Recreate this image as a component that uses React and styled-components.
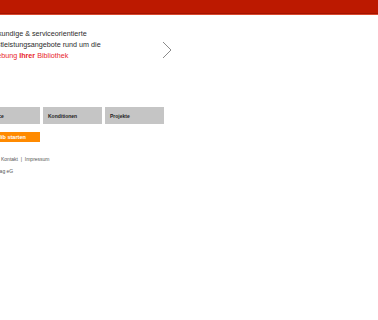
import React from 'react';
import styled, { createGlobalStyle } from 'styled-components';

const GlobalStyle = createGlobalStyle`
  html, body {
    margin: 0;
    padding: 0;
    background: #ffffff;
    overflow: hidden;
  }
  body {
    font-family: 'Liberation Sans', Arial, sans-serif;
  }
`;

const TABS = ['Service', 'Konditionen', 'Projekte'];

// --- Styled Components ---

const Header = styled.header`
  height: 13px;
  background: #bc1900;
  border-bottom: 1px solid #a31400;
  box-shadow: 0 1px 0 #d8482e;
`;

const Page = styled.main`
  margin-left: -19px;
  width: 200px;
  padding-top: 14px;
`;

const Teaser = styled.section`
  display: flex;
  align-items: flex-start;
  justify-content: space-between;
`;

const TeaserText = styled.p`
  margin: 0;
  padding-left: 1px;
  font-size: 7.2px;
  line-height: 11px;
  color: #2b2b2b;
`;

const Highlight = styled.span`
  color: #e8262b;
  b { font-weight: 700; }
`;

const Chevron = styled.svg`
  width: 12px;
  height: 18px;
  margin-top: 13px;
  margin-right: 8px;
`;

const Tabs = styled.nav`
  display: flex;
  gap: 3px;
  margin-top: 46px;
`;

const Tab = styled.div`
  width: 59px;
  height: 17px;
  display: flex;
  align-items: center;
  padding-left: 5px;
  box-sizing: border-box;
  background: #c5c5c5;
  font-size: 5px;
  font-weight: 700;
  color: #222;
`;

const StartButton = styled.button`
  display: flex;
  align-items: center;
  margin-top: 8px;
  width: 59px;
  height: 10px;
  padding: 0 0 0 7px;
  border: none;
  background: #ff8a00;
  color: #fff;
  font-family: 'Liberation Sans', Arial, sans-serif;
  font-size: 5.5px;
  font-weight: 700;
`;

const Footer = styled.footer`
  margin-top: 11px;
  padding-left: 20px;
  font-size: 5px;
  line-height: 12px;
  color: #555;
`;

const Owner = styled.div`
  margin-left: -10px;
`;

// --- Component ---

const App = () => (
  <>
    <GlobalStyle />
    <Header />
    <Page>
      <Teaser>
        <TeaserText>
          Fachkundige &amp; serviceorientierte<br />
          Dienstleistungsangebote rund um die<br />
          <Highlight>Umgebung <b>Ihrer</b> Bibliothek</Highlight>
        </TeaserText>
        <Chevron viewBox="0 0 12 18">
          <path d="M2 1 L10 9 L2 17" fill="none" stroke="#8a8a8a" strokeWidth="1" />
        </Chevron>
      </Teaser>
      <Tabs>
        {TABS.map(t => <Tab key={t}>{t}</Tab>)}
      </Tabs>
      <StartButton>Weblib starten</StartButton>
      <Footer>
        <div>Kontakt &nbsp;|&nbsp; Impressum</div>
        <Owner>Verlag eG</Owner>
      </Footer>
    </Page>
  </>
);

export default App;
